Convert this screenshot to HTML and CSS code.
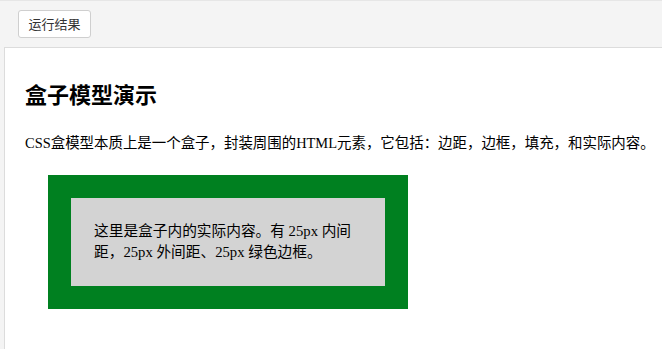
FILE: index.html
```html
<!DOCTYPE html>
<html lang="zh-CN">
<head>
<meta charset="utf-8">
<title>运行结果</title>
<link rel="stylesheet" href="styles.css">
</head>
<body>
<div class="page">
  <div class="toolbar">
    <button class="run-btn" type="button">运行结果</button>
  </div>
  <div class="result">
    <div class="frame">
      <h2 class="title">盒子模型演示</h2>
      <p class="intro">CSS盒模型本质上是一个盒子，封装周围的HTML元素，它包括：边距，边框，填充，和实际内容。</p>
      <div class="box">这里是盒子内的实际内容。有 25px 内间距，25px 外间距、25px 绿色边框。</div>
    </div>
  </div>
</div>
</body>
</html>
```

FILE: styles.css
```css
html, body {
  margin: 0;
  padding: 0;
  background: #f4f4f4;
}

.page {
  width: 662px;
  height: 349px;
  overflow: hidden;
  display: flex;
  flex-direction: column;
  background: #f4f4f4;
  border-top: 1px solid #e6e6e6;
  box-sizing: border-box;
}

.toolbar {
  height: 46px;
  box-sizing: border-box;
  padding: 9px 0 0 18px;
  flex: none;
}

.run-btn {
  height: 28px;
  width: 73px;
  padding: 0;
  background: #fff;
  border: 1px solid #cfcfcf;
  border-radius: 3px;
  color: #333;
  font-family: "Noto Sans CJK SC", "Noto Sans", sans-serif;
  font-size: 13px;
  line-height: 26px;
}

.result {
  flex: 1;
  margin-left: 4px;
  background: #fff;
  border-top: 1px solid #dcdcdc;
  border-left: 1px solid #dcdcdc;
}

.frame {
  padding: 12px 20px 0 20px;
  font-family: "Liberation Serif", "Noto Sans CJK SC", serif;
  color: #000;
}

.title {
  margin: 21px 0 0 0;
  font-size: 22px;
  line-height: 30px;
  font-weight: bold;
}

.intro {
  margin: 22px 0 0 0;
  font-size: 14.45px;
  line-height: 21px;
  white-space: nowrap;
}

.box {
  margin: 21px 23px 0 23px;
  width: 268px;
  padding: 23px;
  border: 23px solid #008020;
  background: #d3d3d3;
  font-size: 14.7px;
  line-height: 21px;
}
```
